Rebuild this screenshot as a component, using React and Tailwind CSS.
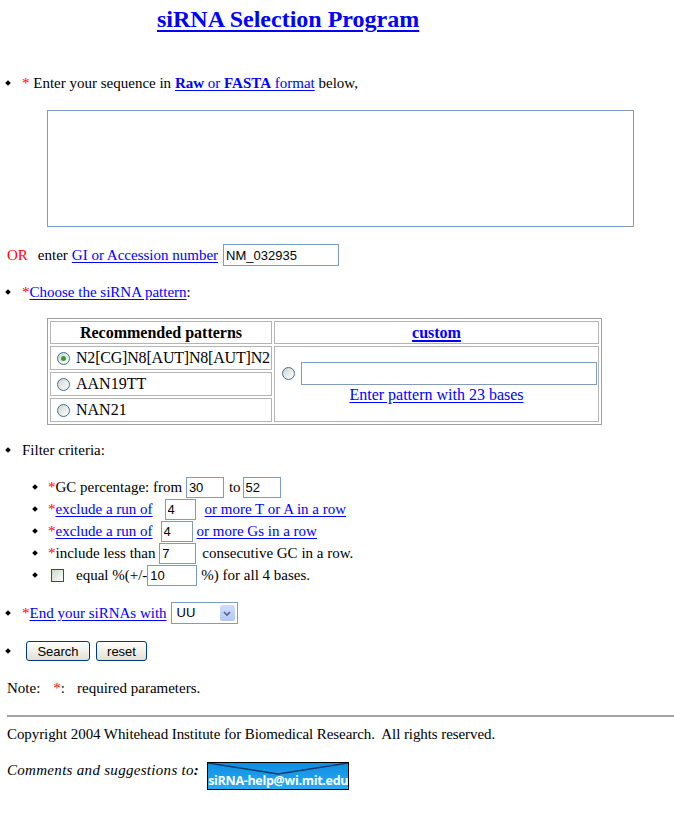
import React from 'react';

const Diamond = ({ indent = 'pl-[6px] w-[22px]' }) => (
    <span className={`${indent} flex items-center shrink-0`}>
        <span className="block w-[4px] h-[4px] bg-black rotate-45" />
    </span>
);

const Star = () => <span className="text-[#ff0000]">*</span>;

const Radio = ({ checked }) => (
    <span className="w-[13px] h-[13px] rounded-full border border-[#3d6c96] bg-gradient-to-br from-[#d3d3cc] to-white flex items-center justify-center shrink-0">
        {checked && <span className="block w-[5px] h-[5px] rounded-full bg-[#2ea52e]" />}
    </span>
);

const Field = ({ value = '', className = '' }) => (
    <input
        readOnly
        value={value}
        className={`h-[21px] border border-[#7f9db9] bg-white px-[2px] font-['Liberation_Sans',sans-serif] text-[13px] text-black outline-none shrink-0 ${className}`}
    />
);

const linkCls = 'text-[#0000ff] underline underline-offset-[2px]';

const XpButton = ({ children, width }) => (
    <button className={`${width} h-[20px] border border-[#003c74] rounded-[3px] bg-gradient-to-b from-white to-[#e2e0d4] font-['Liberation_Sans',sans-serif] text-[13px] leading-none text-black`}>
        {children}
    </button>
);

export default function App() {
    return (
        <div className="min-h-[828px] bg-white font-['Liberation_Serif',serif] text-[15px] leading-[18px] text-black">
            <div className="pt-[5px] pl-[157px]">
                <a className="text-[24px] leading-[28px] font-bold text-[#0000ff] underline decoration-2 underline-offset-[3px]">
                    siRNA Selection Program
                </a>
            </div>

            <div className="mt-[39px] flex items-center h-[22px]">
                <Diamond />
                <Star />
                <span className="whitespace-pre"> Enter your sequence in </span>
                <a className={linkCls}><b>Raw</b> or <b>FASTA</b> format</a>
                <span className="whitespace-pre"> below,</span>
            </div>

            <textarea readOnly className="block mt-[16px] ml-[47px] w-[587px] h-[117px] border border-[#7f9db9] resize-none outline-none" />

            <div className="mt-[17px] flex items-center h-[22px] pl-[7px]">
                <span className="text-[#ff0000]">OR</span>
                <span className="ml-[10px]">enter</span>
                <a className={`ml-[4px] ${linkCls}`}>GI or Accession number</a>
                <Field value="NM_032935" className="ml-[5px] w-[116px] h-[22px]" />
            </div>

            <div className="mt-[15px] flex items-center h-[22px]">
                <Diamond />
                <Star />
                <a className={linkCls}>Choose the siRNA pattern</a>
                <span>:</span>
            </div>

            <table className="mt-[15px] ml-[47px] border border-[#a0a0a0] border-separate border-spacing-[2px] text-[16px] table-fixed">
                <tbody>
                    <tr>
                        <th className="w-[222px] h-[23px] p-0 border border-[#b4b4b4] font-bold text-center">Recommended patterns</th>
                        <th className="w-[325px] h-[23px] p-0 border border-[#b4b4b4] font-bold text-center">
                            <a className={`${linkCls} decoration-2`}>custom</a>
                        </th>
                    </tr>
                    <tr>
                        <td className="h-[24px] p-0 border border-[#b4b4b4]">
                            <div className="flex items-center pl-[6px] whitespace-nowrap overflow-hidden">
                                <Radio checked />
                                <span className="ml-[6px] tracking-[-0.2px]">N2[CG]N8[AUT]N8[AUT]N2</span>
                            </div>
                        </td>
                        <td rowSpan={3} className="p-0 border border-[#b4b4b4] align-middle">
                            <div className="flex flex-col items-center pb-[2px]">
                                <div className="flex items-center self-stretch pl-[7px] pr-[1px]">
                                    <Radio />
                                    <Field className="ml-[6px] w-[296px] h-[23px]" />
                                </div>
                                <a className={`mt-[1px] ${linkCls}`}>Enter pattern with 23 bases</a>
                            </div>
                        </td>
                    </tr>
                    <tr>
                        <td className="h-[24px] p-0 border border-[#b4b4b4]">
                            <div className="flex items-center pl-[6px]">
                                <Radio />
                                <span className="ml-[6px]">AAN19TT</span>
                            </div>
                        </td>
                    </tr>
                    <tr>
                        <td className="h-[24px] p-0 border border-[#b4b4b4]">
                            <div className="flex items-center pl-[6px]">
                                <Radio />
                                <span className="ml-[6px]">NAN21</span>
                            </div>
                        </td>
                    </tr>
                </tbody>
            </table>

            <div className="mt-[14px] flex items-center h-[22px]">
                <Diamond />
                <span>Filter criteria:</span>
            </div>

            <div className="mt-[15px]">
                <div className="flex items-center h-[22px]">
                    <Diamond indent="pl-[33px] w-[48px]" />
                    <Star />
                    <span className="whitespace-pre">GC percentage: from </span>
                    <Field value="30" className="w-[38px]" />
                    <span className="ml-[5px]">to</span>
                    <Field value="52" className="ml-[2px] w-[38px]" />
                </div>
                <div className="flex items-center h-[22px]">
                    <Diamond indent="pl-[33px] w-[48px]" />
                    <Star />
                    <a className={linkCls}>exclude a run of</a>
                    <Field value="4" className="ml-[12px] w-[31px]" />
                    <a className={`ml-[9px] ${linkCls}`}>or more T or A in a row</a>
                </div>
                <div className="flex items-center h-[22px]">
                    <Diamond indent="pl-[33px] w-[48px]" />
                    <Star />
                    <a className={linkCls}>exclude a run of</a>
                    <Field value="4" className="ml-[8px] w-[32px]" />
                    <a className={`ml-[4px] ${linkCls}`}>or more Gs in a row</a>
                </div>
                <div className="flex items-center h-[22px]">
                    <Diamond indent="pl-[33px] w-[48px]" />
                    <Star />
                    <span className="whitespace-pre">include less than </span>
                    <Field value="7" className="w-[37px]" />
                    <span className="ml-[6px]">consecutive GC in a row.</span>
                </div>
                <div className="flex items-center h-[22px]">
                    <Diamond indent="pl-[33px] w-[48px]" />
                    <span className="ml-[3px] w-[13px] h-[13px] border border-[#1c5180] bg-gradient-to-br from-[#d3d3cc] to-white shrink-0" />
                    <span className="ml-[12px] whitespace-pre">equal %(+/-</span>
                    <Field value="10" className="w-[50px]" />
                    <span className="ml-[4px]">%) for all 4 bases.</span>
                </div>
            </div>

            <div className="mt-[16px] flex items-center h-[22px]">
                <Diamond />
                <Star />
                <a className={linkCls}>End your siRNAs with</a>
                <div className="ml-[4px] w-[67px] h-[22px] border border-[#7f9db9] bg-white flex items-center justify-between pl-[5px] pr-[2px] font-['Liberation_Sans',sans-serif] text-[13px]">
                    <span>UU</span>
                    <span className="w-[15px] h-[16px] rounded-[2px] bg-gradient-to-b from-[#cfdcfd] to-[#b3c6f5] flex items-center justify-center">
                        <svg width="8" height="5" viewBox="0 0 8 5">
                            <path d="M1 1 L4 4 L7 1" stroke="#4d6185" strokeWidth="1.6" fill="none" />
                        </svg>
                    </span>
                </div>
            </div>

            <div className="mt-[16px] flex items-center h-[22px]">
                <Diamond indent="pl-[6px] w-[26px]" />
                <XpButton width="w-[64px]">Search</XpButton>
                <span className="ml-[6px]" />
                <XpButton width="w-[51px]">reset</XpButton>
            </div>

            <div className="mt-[15px] flex items-center h-[22px] pl-[7px]">
                <span>Note:</span>
                <span className="ml-[13px] text-[#ff0000]">*</span>
                <span>:</span>
                <span className="ml-[12px]">required parameters.</span>
            </div>

            <hr className="mt-[16px] ml-[7px] border-0 border-t-2 border-[#a3a3a3]" />

            <div className="mt-[6px] flex items-center h-[22px] pl-[7px]">
                <span className="whitespace-pre tracking-[-0.08px]">Copyright 2004 Whitehead Institute for Biomedical Research.  All rights reserved.</span>
            </div>

            <div className="mt-[16px] flex items-start pl-[7px]">
                <span className="italic tracking-[0.3px]">Comments and suggestions to<b>:</b></span>
                <div className="relative ml-[8px] mt-[1px] w-[142px] h-[28px] border border-black bg-gradient-to-b from-[#0f8fe2] to-[#27aaf2] flex items-end justify-center">
                    <svg className="absolute left-0 top-0" width="140" height="14" viewBox="0 0 140 14">
                        <path d="M0 0 L70 11 L140 0" stroke="#0c3a70" strokeWidth="1.4" fill="none" />
                    </svg>
                    <span className="relative font-['Open_Sans',sans-serif] font-bold text-[12.5px] leading-[16px] text-white tracking-[-0.3px]">
                        siRNA-help@wi.mit.edu
                    </span>
                </div>
            </div>
        </div>
    );
}
